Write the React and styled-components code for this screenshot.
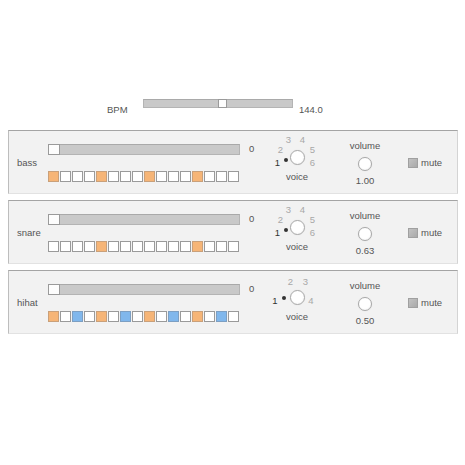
import React from "react";
import styled, { createGlobalStyle } from "styled-components";

const Global = createGlobalStyle`
  html, body { margin: 0; padding: 0; background: #ffffff; }
  body { font-family: "Liberation Sans", Arial, sans-serif; color: #555; }
`;

const Page = styled.div`
  width: 465px;
  height: 465px;
  padding-top: 99px;
  box-sizing: border-box;
`;

const BpmRow = styled.div`
  display: flex;
  align-items: flex-start;
  padding-left: 107px;
  height: 17px;
`;

const SmallText = styled.span`
  font-size: 9.5px;
  line-height: 12px;
  color: ${(p) => p.$color || "#555"};
  white-space: nowrap;
`;

const BpmLabel = styled(SmallText)`
  width: 36px;
  margin-top: 5px;
`;

const BpmValue = styled(SmallText)`
  margin-left: 6px;
  margin-top: 5px;
`;

const HSlider = styled.div`
  position: relative;
  width: ${(p) => p.$w}px;
  height: ${(p) => p.$h}px;
  box-sizing: border-box;
  background: #c9c9c9;
  border: 1px solid #b4b4b4;
  border-top-color: #a9a9a9;
`;

const Handle = styled.div`
  position: absolute;
  top: -1px;
  bottom: -1px;
  width: ${(p) => p.$w}px;
  box-sizing: border-box;
  background: #fdfdfd;
  border: 1px solid #9a9a9a;
`;

const PanelList = styled.div`
  display: flex;
  flex-direction: column;
  gap: 6px;
  margin-top: 14px;
  padding-left: 8px;
`;

const Panel = styled.div`
  display: flex;
  align-items: flex-start;
  width: 450px;
  height: 64px;
  box-sizing: border-box;
  background: #f2f2f2;
  border-top: 1px solid #a4a4a4;
  border-left: 1px solid #bdbdbd;
  border-right: 1px solid #d4d4d4;
  border-bottom: 1px solid #e2e2e2;
  padding-left: 8px;
`;

const TrackLabel = styled(SmallText)`
  width: 31px;
  align-self: center;
  margin-top: 2px;
`;

const SeqCol = styled.div`
  width: 224px;
  margin-top: 12px;
  display: flex;
  flex-direction: column;
  gap: 16px;
`;

const SeqTop = styled.div`
  display: flex;
  align-items: center;
`;

const Zero = styled(SmallText)`
  margin-left: 9px;
`;

const Steps = styled.div`
  display: flex;
  gap: 1px;
`;

const stepColors = {
  0: { bg: "#ffffff", bd: "#9a9a9a" },
  1: { bg: "#f6b577", bd: "#c9a07a" },
  2: { bg: "#80b7ec", bd: "#7d9fc2" },
};

const Step = styled.div`
  width: 11px;
  height: 11px;
  box-sizing: border-box;
  background: ${(p) => stepColors[p.$v].bg};
  border: 1px solid ${(p) => stepColors[p.$v].bd};
`;

const VoiceCol = styled.div`
  width: 50px;
  margin-top: 4px;
  display: flex;
  flex-direction: column;
  align-items: center;
`;

const Dial = styled.div`
  position: relative;
  width: 50px;
  height: 36px;
`;

const Knob = styled.div`
  width: ${(p) => p.$d}px;
  height: ${(p) => p.$d}px;
  box-sizing: border-box;
  border-radius: 50%;
  background: radial-gradient(circle at 45% 40%, #ffffff 55%, #ececec 100%);
  border: 1px solid #a8a8a8;
  box-shadow: 0 0 1px rgba(0, 0, 0, 0.15);
`;

const DialKnob = styled(Knob)`
  position: absolute;
  left: ${(p) => p.$cx - p.$d / 2}px;
  top: ${(p) => p.$cy - p.$d / 2}px;
`;

const DialLabel = styled.span`
  position: absolute;
  font-size: 9.5px;
  line-height: 10px;
  width: 10px;
  margin-left: -5px;
  margin-top: -5px;
  text-align: center;
  color: ${(p) => (p.$active ? "#333" : "#a8a8a8")};
`;

const Dot = styled.div`
  position: absolute;
  width: 4px;
  height: 4px;
  margin-left: -2px;
  margin-top: -2px;
  border-radius: 50%;
  background: #333;
`;

const VolumeCol = styled.div`
  width: 50px;
  margin-left: 18px;
  margin-top: 9px;
  display: flex;
  flex-direction: column;
  align-items: center;
`;

const VolKnob = styled(Knob)`
  margin-top: 5px;
`;

const VolValue = styled(SmallText)`
  margin-top: 4px;
`;

const MuteBox = styled.label`
  display: flex;
  align-items: center;
  gap: 3px;
  margin-left: 18px;
  align-self: center;
  margin-top: 1px;
`;

const Check = styled.span`
  width: 10px;
  height: 10px;
  box-sizing: border-box;
  background: linear-gradient(135deg, #c2c2c2, #a9a9a9);
  border: 1px solid #a0a0a0;
`;

const CX = 25;
const CY = 22;

const layouts = {
  6: [
    [-19.5, 6],
    [-16.5, -7],
    [-8.5, -17],
    [5.5, -17],
    [15.5, -7],
    [15.5, 6],
  ],
  4: [
    [-22, 4],
    [-6.5, -15],
    [8.5, -15],
    [14, 4],
  ],
};

function VoiceDial({ count }) {
  const pos = layouts[count];
  const dot = count === 6 ? [-11, 3] : [-13, 1];
  return (
    <VoiceCol>
      <Dial>
        {pos.map(([x, y], i) => (
          <DialLabel
            key={i}
            $active={i === 0}
            style={{ left: CX + x, top: CY + y }}
          >
            {i + 1}
          </DialLabel>
        ))}
        <DialKnob $d={15} $cx={CX} $cy={CY} />
        <Dot style={{ left: CX + dot[0], top: CY + dot[1] }} />
      </Dial>
      <SmallText>voice</SmallText>
    </VoiceCol>
  );
}

const tracks = [
  {
    name: "bass",
    voices: 6,
    volume: "1.00",
    steps: [1, 0, 0, 0, 1, 0, 0, 0, 1, 0, 0, 0, 1, 0, 0, 0],
  },
  {
    name: "snare",
    voices: 6,
    volume: "0.63",
    steps: [0, 0, 0, 0, 1, 0, 0, 0, 0, 0, 0, 0, 1, 0, 0, 0],
  },
  {
    name: "hihat",
    voices: 4,
    volume: "0.50",
    steps: [1, 0, 2, 0, 1, 0, 2, 0, 1, 0, 2, 0, 1, 0, 2, 0],
  },
];

function Track({ t }) {
  return (
    <Panel>
      <TrackLabel>{t.name}</TrackLabel>
      <SeqCol>
        <SeqTop>
          <HSlider $w={192} $h={11}>
            <Handle $w={12} style={{ left: -1 }} />
          </HSlider>
          <Zero>0</Zero>
        </SeqTop>
        <Steps>
          {t.steps.map((v, i) => (
            <Step key={i} $v={v} />
          ))}
        </Steps>
      </SeqCol>
      <VoiceDial count={t.voices} />
      <VolumeCol>
        <SmallText>volume</SmallText>
        <VolKnob $d={14} />
        <VolValue>{t.volume}</VolValue>
      </VolumeCol>
      <MuteBox>
        <Check />
        <SmallText>mute</SmallText>
      </MuteBox>
    </Panel>
  );
}

export default function App() {
  const bpmPos = 0.53;
  return (
    <Page>
      <Global />
      <BpmRow>
        <BpmLabel>BPM</BpmLabel>
        <HSlider $w={150} $h={9}>
          <Handle $w={9} style={{ left: Math.round(bpmPos * 141) - 1 }} />
        </HSlider>
        <BpmValue>144.0</BpmValue>
      </BpmRow>
      <PanelList>
        {tracks.map((t) => (
          <Track key={t.name} t={t} />
        ))}
      </PanelList>
    </Page>
  );
}
